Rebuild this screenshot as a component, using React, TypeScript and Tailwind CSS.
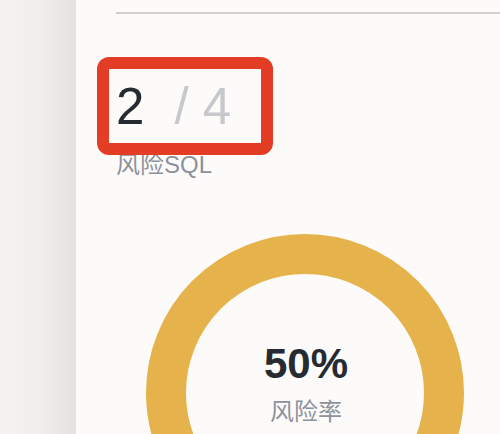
import type { ReactNode } from "react";

const font = { fontFamily: '"Liberation Sans", "Noto Sans CJK SC", sans-serif' };

function Ring({ percent, children }: { percent: number; children: ReactNode }): JSX.Element {
  const r = 139;
  const c = 2 * Math.PI * r;
  return (
    <div className="relative ml-[30px] h-[318px] w-[318px] shrink-0">
      <svg width="318" height="318" viewBox="0 0 318 318">
        <circle cx="159" cy="159" r={r} fill="none" stroke="#e6b24b" strokeWidth="40" />
        {percent < 100 && (
          <circle
            cx="159"
            cy="159"
            r={r}
            fill="none"
            stroke="#e6b24b"
            strokeWidth="40"
            strokeDasharray={`${(c * percent) / 100} ${c}`}
            transform="rotate(-90 159 159)"
          />
        )}
      </svg>
      <div className="absolute inset-0 flex flex-col items-center pt-[109px] pl-[2px]">{children}</div>
    </div>
  );
}

export default function App(): JSX.Element {
  return (
    <div className="flex h-[434px] w-[500px] overflow-hidden bg-[#fcfbfa]" style={font}>
      <div className="w-[76px] shrink-0 bg-gradient-to-r from-[#f4f3f1] via-[#f0efed] to-[#e3e2e0]" />

      <div className="min-w-0 flex-1 pl-[40px] pt-[12px]">
        <div className="h-[2px] w-full bg-[#d0d0d0]" />

        <div className="relative mt-[67px] flex items-baseline text-[51px] leading-none">
          <span className="text-[#262a31]">2</span>
          <span className="ml-[30px] whitespace-pre text-[#c6c8cc]">/ 4</span>
          <div className="absolute left-[-19px] top-[-24px] h-[98px] w-[176px] rounded-[12px] border-[12px] border-[#e33e25]" />
        </div>

        <div className="mt-[21px] text-[24px] leading-none text-[#8d929a]">风险SQL</div>

        <div className="mt-[57px]">
          <Ring percent={100}>
            <div className="text-[42px] font-bold leading-none text-[#262a31]">50%</div>
            <div className="mt-[15px] text-[24px] leading-none text-[#8d929a]">风险率</div>
          </Ring>
        </div>
      </div>
    </div>
  );
}
